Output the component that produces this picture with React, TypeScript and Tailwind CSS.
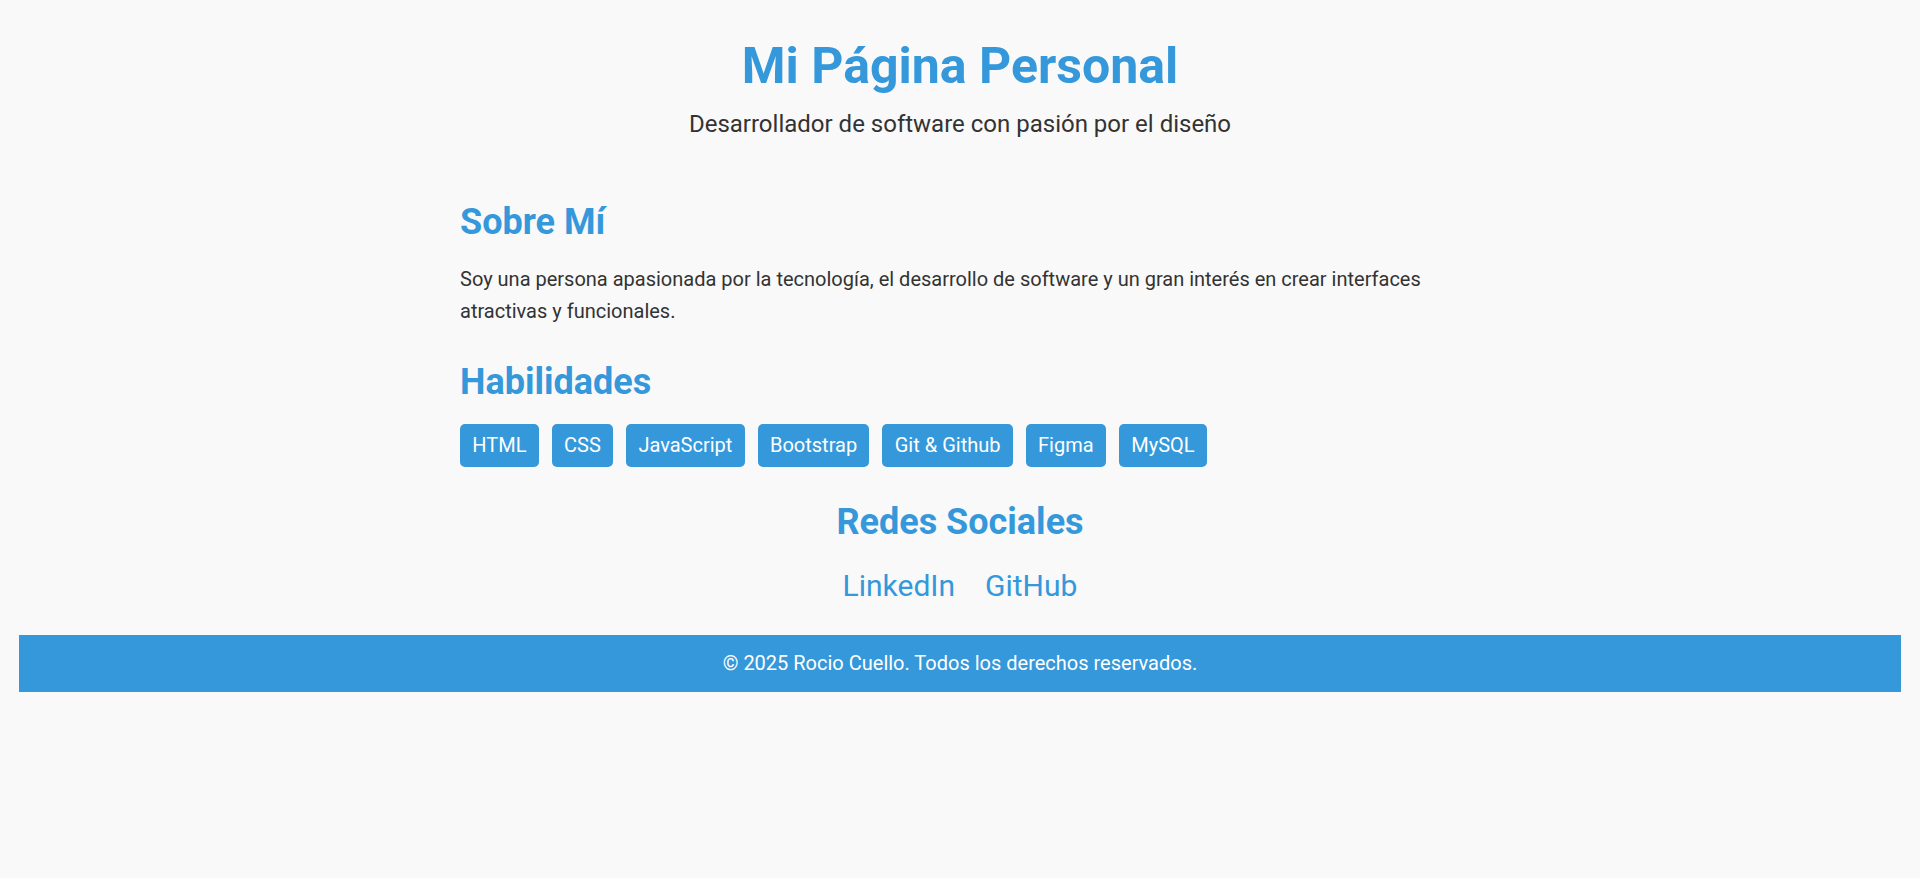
export default function App() {
  const skills = ["HTML", "CSS", "JavaScript", "Bootstrap", "Git & Github", "Figma", "MySQL"];
  return (
    <div
      className="min-h-screen bg-[#f9f9f9] px-[19px] text-[#333]"
      style={{ fontFamily: 'Roboto, "Noto Sans", "Liberation Sans", sans-serif' }}
    >
      <header className="pt-[39px] text-center">
        <h1 className="text-[50px] font-bold leading-[54px] text-[#3498db]">Mi Página Personal</h1>
        <p className="mt-[16px] text-[24px] leading-[30px]">
          Desarrollador de software con pasión por el diseño
        </p>
      </header>

      <main className="mx-auto mt-[62px] max-w-[1000px]">
        <section>
          <h2 className="text-[36px] font-bold leading-[43px] text-[#3498db]">Sobre Mí</h2>
          <p className="mt-[19px] text-[20px] leading-[32px]">
            Soy una persona apasionada por la tecnología, el desarrollo de software y un gran interés en crear
            interfaces atractivas y funcionales.
          </p>
        </section>

        <section className="mt-[34px]">
          <h2 className="text-[36px] font-bold leading-[43px] text-[#3498db]">Habilidades</h2>
          <div className="mt-[19.5px] flex flex-wrap gap-[13px]">
            {skills.map((s) => (
              <span
                key={s}
                className="flex h-[43px] items-center rounded-[5px] bg-[#3498db] px-[12.3px] text-[20px] text-white"
              >
                {s}
              </span>
            ))}
          </div>
        </section>

        <section className="mt-[34px] text-center">
          <h2 className="text-[36px] font-bold leading-[43px] text-[#3498db]">Redes Sociales</h2>
          <div className="mt-[22px] flex justify-center gap-[30px]">
            <a href="#" className="text-[30px] leading-[40px] text-[#3498db]">
              LinkedIn
            </a>
            <a href="#" className="text-[30px] leading-[40px] text-[#3498db]">
              GitHub
            </a>
          </div>
        </section>
      </main>

      <footer className="mt-[29px] flex h-[57px] items-center justify-center bg-[#3498db] text-[20px] text-white">
        © 2025 Rocio Cuello. Todos los derechos reservados.
      </footer>
    </div>
  );
}
